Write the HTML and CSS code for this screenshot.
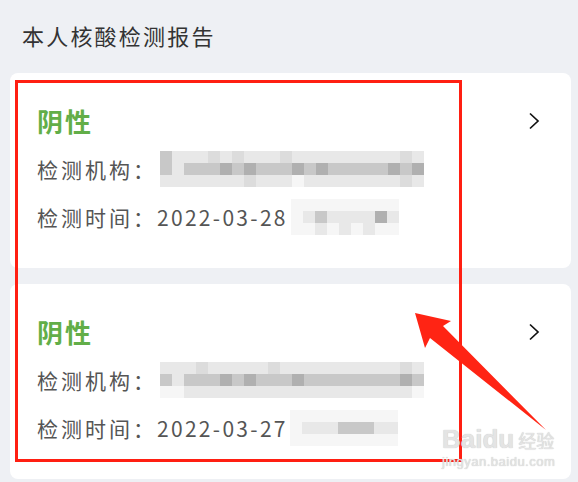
FILE: index.html
```html
<!DOCTYPE html>
<html lang="zh-CN">
<head>
    <meta charset="UTF-8">
    <title>本人核酸检测报告</title>
    <link rel="stylesheet" href="styles.css">
</head>
<body>
    <div class="page">
        <header class="page-title">本人核酸检测报告</header>

        <section class="report">
            <div class="report-info">
                <div class="result">阴性</div>
                <div class="row">
                    <span class="label">检测机构：</span>
                    <div class="pix pix-org">
                        <span class="m"></span><span class="l"></span><span class="l"></span><span class="l"></span><span class="k"></span><span class="l"></span><span class="k"></span><span class="l"></span><span class="l"></span><span class="l"></span><span class="k"></span><span class="l"></span><span class="l"></span><span class="l"></span><span class="l"></span><span class="l"></span><span class="l"></span><span class="l"></span><span class="l"></span><span class="l"></span><span class="k"></span><span class="l"></span>
                        <span class="m"></span><span class="l"></span><span class="m"></span><span class="m"></span><span class="m"></span><span class="d"></span><span class="m"></span><span class="d"></span><span class="m"></span><span class="m"></span><span class="m"></span><span class="d"></span><span class="m"></span><span class="d"></span><span class="m"></span><span class="m"></span><span class="m"></span><span class="m"></span><span class="m"></span><span class="d"></span><span class="m"></span><span class="d"></span>
                        <span class="l"></span><span class="l"></span><span class="l"></span><span class="l"></span><span class="l"></span><span class="l"></span><span class="l"></span><span class="k"></span><span class="l"></span><span class="l"></span><span class="l"></span><span class="w"></span><span class="l"></span><span class="l"></span><span class="l"></span><span class="l"></span><span class="l"></span><span class="l"></span><span class="l"></span><span class="l"></span><span class="k"></span><span class="l"></span>
                    </div>
                </div>
                <div class="row">
                    <span class="label">检测时间：</span>
                    <span class="value">2022-03-28</span>
                    <div class="pix pix-time">
                        <span class="w"></span><span class="w"></span><span class="w"></span><span class="w"></span><span class="w"></span><span class="w"></span><span class="w"></span><span class="w"></span><span class="w"></span>
                        <span class="w"></span><span class="l"></span><span class="m"></span><span class="l"></span><span class="l"></span><span class="l"></span><span class="l"></span><span class="d"></span><span class="l"></span>
                        <span class="w"></span><span class="w"></span><span class="l"></span><span class="w"></span><span class="l"></span><span class="w"></span><span class="l"></span><span class="w"></span><span class="w"></span>
                    </div>
                </div>
            </div>
            <div class="chevron">
                <svg width="12" height="18" viewBox="0 0 12 18"><path d="M2 1.5 L10 9 L2 16.5" fill="none" stroke="#111" stroke-width="1.7"/></svg>
            </div>
        </section>

        <section class="report">
            <div class="report-info">
                <div class="result">阴性</div>
                <div class="row">
                    <span class="label">检测机构：</span>
                    <div class="pix pix-org">
                        <span class="l"></span><span class="l"></span><span class="l"></span><span class="k"></span><span class="l"></span><span class="l"></span><span class="l"></span><span class="l"></span><span class="l"></span><span class="k"></span><span class="l"></span><span class="l"></span><span class="l"></span><span class="l"></span><span class="l"></span><span class="l"></span><span class="l"></span><span class="l"></span><span class="l"></span><span class="l"></span><span class="k"></span><span class="l"></span>
                        <span class="m"></span><span class="l"></span><span class="m"></span><span class="m"></span><span class="m"></span><span class="d"></span><span class="m"></span><span class="d"></span><span class="m"></span><span class="m"></span><span class="m"></span><span class="d"></span><span class="m"></span><span class="m"></span><span class="m"></span><span class="m"></span><span class="m"></span><span class="m"></span><span class="m"></span><span class="m"></span><span class="d"></span><span class="m"></span>
                        <span class="w"></span><span class="w"></span><span class="l"></span><span class="l"></span><span class="l"></span><span class="l"></span><span class="l"></span><span class="l"></span><span class="l"></span><span class="l"></span><span class="l"></span><span class="l"></span><span class="l"></span><span class="l"></span><span class="l"></span><span class="l"></span><span class="l"></span><span class="l"></span><span class="l"></span><span class="l"></span><span class="l"></span><span class="w"></span>
                    </div>
                </div>
                <div class="row">
                    <span class="label">检测时间：</span>
                    <span class="value">2022-03-27</span>
                    <div class="pix pix-time2">
                        <span class="w"></span><span class="w"></span><span class="w"></span><span class="w"></span><span class="w"></span><span class="w"></span><span class="w"></span><span class="w"></span><span class="w"></span>
                        <span class="w"></span><span class="l"></span><span class="l"></span><span class="l"></span><span class="m"></span><span class="m"></span><span class="m"></span><span class="l"></span><span class="l"></span>
                        <span class="w"></span><span class="w"></span><span class="w"></span><span class="w"></span><span class="w"></span><span class="w"></span><span class="w"></span><span class="w"></span><span class="w"></span>
                    </div>
                </div>
            </div>
            <div class="chevron">
                <svg width="12" height="18" viewBox="0 0 12 18"><path d="M2 1.5 L10 9 L2 16.5" fill="none" stroke="#111" stroke-width="1.7"/></svg>
            </div>
        </section>
    </div>

    <!-- annotation layer -->
    <div class="mark-box"></div>
    <svg class="mark-arrow" width="578" height="482" viewBox="0 0 578 482">
        <polygon points="415,313 451,321 443,326 546,430 430,338 425,348" fill="#ff2414"/>
    </svg>
    <div class="watermark">
        <div class="wm-top"><span>Bai</span><span class="paw">du</span><span class="wm-cn">经验</span></div>
        <div class="wm-url">jingyan.baidu.com</div>
    </div>
</body>
</html>
```

FILE: styles.css
```css
* {
    box-sizing: border-box;
}

html, body {
    margin: 0;
    height: 100%;
    background-color: #eef0f4;
    font-family: "Noto Sans CJK SC", "Noto Sans", sans-serif;
    color: #555;
    overflow: hidden;
}

.page {
    padding: 0 7px 0 10px;
}

.page-title {
    height: 73px;
    padding: 18px 0 0 12px;
    font-size: 22px;
    line-height: 34px;
    letter-spacing: 2.2px;
    color: #333;
}

.report {
    display: flex;
    height: 195px;
    margin-bottom: 16px;
    padding: 24px 0 0 27px;
    background-color: #fff;
    border-radius: 8px;
}

.report-info {
    flex: 1;
}

.result {
    height: 48px;
    line-height: 48px;
    font-size: 26px;
    font-weight: 700;
    letter-spacing: 2px;
    color: #62ae48;
}

.row {
    display: flex;
    align-items: center;
    height: 48px;
    font-size: 21px;
    letter-spacing: 3px;
    color: #555;
}

.label {
    white-space: nowrap;
}

.value {
    letter-spacing: 2.3px;
}

.pix {
    display: grid;
    grid-auto-rows: 12px;
    filter: blur(0.5px);
}
.pix span.w { background: #f6f6f6; }
.pix span.l { background: #e8e8e8; }
.pix span.k { background: #dcdcdc; }
.pix span.m { background: #c8c8c8; }
.pix span.d { background: #b0b0b0; }

.pix-org {
    grid-template-columns: repeat(22, 12px);
    margin-left: 3px;
}

.pix-time {
    grid-template-columns: repeat(9, 12px);
    margin-left: 3px;
}

.pix-time2 {
    grid-template-columns: repeat(9, 12px);
    margin-left: 2px;
}

.chevron {
    display: flex;
    align-items: center;
    height: 48px;
    margin-right: 31px;
}

.chevron svg {
    display: block;
}

/* annotation layer */
.mark-box {
    position: absolute;
    left: 15px;
    top: 80px;
    width: 447px;
    height: 382px;
    border: 3px solid #ff1f12;
}

.mark-arrow {
    position: absolute;
    left: 0;
    top: 0;
}

.watermark {
    position: absolute;
    left: 442px;
    top: 424px;
    color: #e4e4e4;
    font-family: "Liberation Sans", sans-serif;
    text-shadow: 0 0 1px #bbb;
}

.wm-top {
    display: flex;
    align-items: baseline;
    font-size: 26px;
    line-height: 30px;
    font-weight: 700;
}

.wm-cn {
    font-family: "Noto Sans CJK SC", sans-serif;
    font-size: 18px;
    font-weight: 400;
    margin-left: 4px;
}

.wm-url {
    font-size: 13px;
    line-height: 14px;
    letter-spacing: 0.5px;
}
```
